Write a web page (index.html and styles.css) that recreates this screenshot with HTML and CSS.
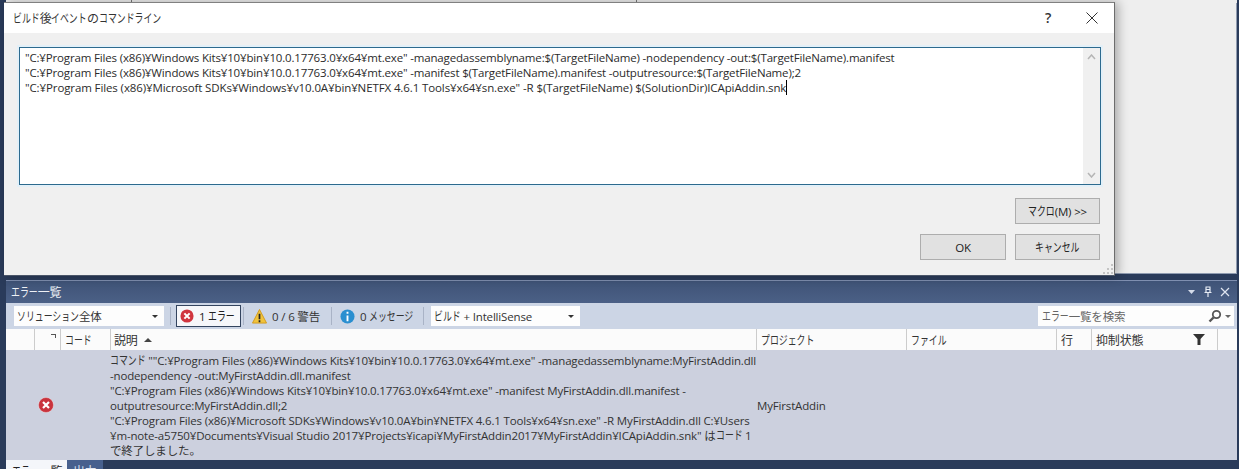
FILE: index.html
```html
<!DOCTYPE html>
<html lang="ja">
<head>
<meta charset="utf-8">
<title>ビルド後イベントのコマンドライン</title>
<link rel="stylesheet" href="styles.css">
</head>
<body>
<div class="desktop">
  <div class="ide-top"><div class="ide-top-sep"></div><div class="ide-top-sep second"></div></div>
  <div class="ide-editor"></div>
  <section class="errors">
    <div class="titlebar">
      <span class="title"><span class="k k3">エラー</span>一覧</span>
      <span class="title-tools">
        <svg width="9" height="6" viewBox="0 0 9 6"><path d="M1 1h7L4.500 5z" fill="#d5dcea"/></svg>
        <svg width="10" height="12" viewBox="0 0 10 12"><path d="M2.500 1h5M3 1.500v5M7 1.500v5M3 3.500h4M1.500 6.500h7M5 7v4" stroke="#e6ebf4" stroke-width="1.200" fill="none"/></svg>
        <svg width="10" height="10" viewBox="0 0 10 10"><path d="M1 1l8 8M9 1l-8 8" stroke="#dfe5f0" stroke-width="1.200"/></svg>
      </span>
    </div>
    <div class="toolbar">
      <div class="combo scope"><span><span class="k k7">ソリューション</span>全体</span><i class="caret"></i></div>
      <i class="sep first"></i>
      <button class="tool active">
        <svg width="14" height="14" viewBox="0 0 16 16"><circle cx="8" cy="8" r="7.500" fill="#d0353f"/><path d="M5 5l6 6M11 5l-6 6" stroke="#fff" stroke-width="2.400"/></svg>
        <span>1 <span class="k k3">エラー</span></span>
      </button>
      <i class="sep"></i>
      <button class="tool warn">
        <svg width="15" height="15" viewBox="0 0 16 16"><path d="M8 .5L15.500 15H.5z" fill="#f0c33c" stroke="#d29a1c"/><path d="M8 5v6M8 12v2" stroke="#222" stroke-width="1.800"/></svg>
        <span>0 / 6 警告</span>
      </button>
      <i class="sep"></i>
      <button class="tool info">
        <svg width="15" height="15" viewBox="0 0 16 16"><circle cx="8" cy="8" r="7.500" fill="#2a8fd0"/><path d="M8 3v2M8 7v6" stroke="#fff" stroke-width="2"/></svg>
        <span>0 <span class="k k5">メッセージ</span></span>
      </button>
      <i class="sep"></i>
      <div class="combo build"><span><span class="k k3">ビルド</span> + IntelliSense</span><i class="caret"></i></div>
      <div class="search">
        <span><span class="k k3">エラー</span>一覧を検索</span>
        <svg width="14" height="14" viewBox="0 0 14 14"><circle cx="8.500" cy="5.500" r="3.700" fill="none" stroke="#555" stroke-width="1.800"/><path d="M5.500 8.500L1.500 12.500" stroke="#555" stroke-width="2.400"/></svg>
        <i class="caret small"></i>
      </div>
    </div>
    <div class="grid head">
      <div class="c c0"></div>
      <div class="c c1"><i class="mark"></i></div>
      <div class="c c2"><span class="k k3">コード</span></div>
      <div class="c c3">説明 <i class="up"></i></div>
      <div class="c c4"><span class="k k6">プロジェクト</span></div>
      <div class="c c5"><span class="k k4">ファイル</span></div>
      <div class="c c6">行</div>
      <div class="c c7">抑制状態<svg width="14" height="13" viewBox="0 0 14 13"><path d="M1 1h12L8.500 6v6H5.500V6z" fill="#333"/></svg></div>
      <div class="c c8"></div>
    </div>
    <div class="grid row">
      <div class="err-icon"><svg width="16" height="16" viewBox="0 0 16 16"><circle cx="8" cy="8" r="7.500" fill="#c9333d"/><circle cx="8" cy="8" r="7.500" fill="none" stroke="#fff" stroke-opacity=".35"/><path d="M5 5l6 6M11 5l-6 6" stroke="#fff" stroke-width="2.200"/></svg></div>
      <div class="desc"><span class="k k4">コマンド</span> ""C:¥Program Files (x86)¥Windows Kits¥10¥bin¥10.0.17763.0¥x64¥mt.exe" -managedassemblyname:MyFirstAddin.dll<br>-nodependency -out:MyFirstAddin.dll.manifest<br>"C:¥Program Files (x86)¥Windows Kits¥10¥bin¥10.0.17763.0¥x64¥mt.exe" -manifest MyFirstAddin.dll.manifest -<br>outputresource:MyFirstAddin.dll;2<br>"C:¥Program Files (x86)¥Microsoft SDKs¥Windows¥v10.0A¥bin¥NETFX 4.6.1 Tools¥x64¥sn.exe" -R MyFirstAddin.dll C:¥Users<br>¥m-note-a5750¥Documents¥Visual Studio 2017¥Projects¥icapi¥MyFirstAddin2017¥MyFirstAddin¥ICApiAddin.snk" は<span class="k k3">コード</span> 1<br>で終了しました。</div>
      <div class="proj">MyFirstAddin</div>
    </div>
    <div class="tabs"><span class="tab on"><span class="k k3">エラー</span>一覧</span><span class="tab">出力</span></div>
  </section>
  <div class="dialog">
    <div class="dlg-title">
      <span class="dlg-name"><span class="k k3">ビルド</span>後<span class="k k4">イベント</span>の<span class="k k7">コマンドライン</span></span>
      <span class="dlg-help">?</span>
      <svg class="dlg-x" width="14" height="14" viewBox="0 0 14 14"><path d="M1.500 1.500l11 11M12.500 1.500l-11 11" stroke="#333" stroke-width="1"/></svg>
    </div>
    <div class="dlg-body">
      <div class="cmd">
        <div class="cmd-text">"C:¥Program Files (x86)¥Windows Kits¥10¥bin¥10.0.17763.0¥x64¥mt.exe" -managedassemblyname:$(TargetFileName) -nodependency -out:$(TargetFileName).manifest<br>"C:¥Program Files (x86)¥Windows Kits¥10¥bin¥10.0.17763.0¥x64¥mt.exe" -manifest $(TargetFileName).manifest -outputresource:$(TargetFileName);2<br><span class="line3">"C:¥Program Files (x86)¥Microsoft SDKs¥Windows¥v10.0A¥bin¥NETFX 4.6.1 Tools¥x64¥sn.exe" -R $(TargetFileName) $(SolutionDir)ICApiAddin.snk</span><i class="cursor"></i></div>
        <div class="scroll">
          <svg width="9" height="6" viewBox="0 0 9 6"><path d="M1 5l3.500-4L8 5" stroke="#b5b5b5" stroke-width="1.500" fill="none"/></svg>
          <svg width="9" height="6" viewBox="0 0 9 6"><path d="M1 1l3.500 4L8 1" stroke="#b5b5b5" stroke-width="1.500" fill="none"/></svg>
        </div>
      </div>
      <div class="btn-row macro"><button class="btn wide"><span class="k k3">マクロ</span>(M) &gt;&gt;</button></div>
      <div class="btn-row actions"><button class="btn">OK</button><button class="btn wide"><span class="k k5">キャンセル</span></button></div>
    </div>
    <svg class="grip" width="10" height="10" viewBox="0 0 10 10"><path d="M8 0h2v2H8zM4 4h2v2H4zM8 4h2v2H8zM0 8h2v2H0zM4 8h2v2H4zM8 8h2v2H8z" fill="#c4c4c4"/></svg>
  </div>
</div>
</body>
</html>
```
FILE: styles.css
```css
* { box-sizing: border-box; }
html, body { margin: 0; padding: 0; }
body { width: 1239px; height: 469px; overflow: hidden; background: #2a3b5a; font-family: "Open Sans", "Noto Sans CJK JP", sans-serif; color: #222; letter-spacing: -0.16px; }
.desktop { position: relative; width: 1239px; height: 469px; display: flex; flex-direction: column; overflow: hidden; padding: 0 2px 0 6px; }
.k { display: inline-block; font-size: 12px; letter-spacing: 0; transform: scaleX(.74); transform-origin: 0 50%; }
.k3 { margin-right: -9.400px; }
.k4 { margin-right: -12.500px; }
.k5 { margin-right: -15.600px; }
.k6 { margin-right: -18.700px; }
.k7 { margin-right: -21.800px; }
.ide-top { height: 3px; background: #eee; display: flex; flex: none; }
.ide-top-sep { width: 1px; margin-left: 125px; background: #777; }
.ide-top-sep.second { margin-left: 504px; }
.ide-editor { height: 271px; background: #eeeeee; border-bottom: 1px solid #8f9bb0; border-right: 1px solid #8f9bb0; flex: none; }
.errors { margin-top: 6px; flex: 1; display: flex; flex-direction: column; border-top: 1px solid #7f8fb0; }
.titlebar { height: 22px; background: linear-gradient(#3f5377, #4b6086); color: #eef1f6; font-size: 12px; display: flex; align-items: center; justify-content: space-between; padding: 0 7px 0 5px; flex: none; }
.title-tools { display: flex; align-items: center; gap: 7px; }
.toolbar { height: 26px; background: #ccd5e5; display: flex; align-items: center; padding-left: 8px; font-size: 11.500px; flex: none; color: #333; }
.combo { height: 20px; background: #fdfdfd; display: flex; align-items: center; justify-content: space-between; padding: 0 6px 0 3px; white-space: nowrap; }
.scope { width: 150px; }
.build { width: 149px; margin-left: 7px; }
.caret { width: 0; height: 0; border: 3px solid transparent; border-top: 3px solid #333; border-bottom: 0; }
.sep { width: 1px; height: 18px; background: #a9b3c6; flex: none; }
.sep.first { margin-left: 6px; }
.tool { height: 22px; border: 1px solid transparent; background: none; display: flex; align-items: center; gap: 5px; padding: 0; font: inherit; color: #333; white-space: nowrap; flex: none; letter-spacing: inherit; }
.tool.active { background: #f6f7fa; border-color: #33445f; color: #222; width: 65px; margin: 0 2px 0 5px; padding-left: 3px; }
.tool.warn { width: 80px; margin-left: 7px; }
.tool.info { width: 84px; margin-left: 7px; }
.search { margin-left: auto; width: 196px; height: 20px; background: #fdfdfd; display: flex; align-items: center; padding: 0 3px 0 4px; color: #666; margin-right: 3px; white-space: nowrap; }
.search span { flex: 1; }
.search .k { flex: none; }
.caret.small { margin-left: 3px; border-top-color: #666; }
.grid { display: flex; flex: none; }
.head { height: 21px; background: #fbfbfb; font-size: 12px; color: #333; }
.c { height: 100%; border-right: 1px solid #ccc; display: flex; align-items: center; padding-left: 4px; white-space: nowrap; }
.c0 { width: 29px; }
.c1 { width: 26px; justify-content: flex-end; align-items: flex-start; padding: 5px 4px 0 0; }
.c2 { width: 50px; }
.c3 { width: 646px; padding-left: 3px; gap: 6px; }
.c4 { width: 150px; }
.c5 { width: 150px; }
.c6 { width: 35px; }
.c7 { width: 126px; justify-content: space-between; padding-right: 11px; }
.c8 { flex: 1; border-right: 0; }
.mark { width: 5px; height: 4px; border-top: 1px solid #555; border-right: 1px solid #555; }
.up { width: 0; height: 0; border: 4px solid transparent; border-bottom: 4px solid #444; border-top: 0; }
.row { height: 110px; background: #ccd0de; font-size: 11.500px; color: #333; align-items: center; }
.err-icon { width: 104px; display: flex; justify-content: flex-start; padding-left: 32px; }
.desc { width: 647px; height: 110px; line-height: 15px; padding: 3px 0 0 0; white-space: nowrap; }
.proj { padding-left: 0; }
.tabs { flex: 1; display: flex; font-size: 12px; overflow: hidden; }
.tab { padding: 2px 6px 0; color: #dfe5f2; background: #47608e; height: 20px; white-space: nowrap; }
.tab.on { background: #f4f6fa; color: #222; width: 61px; }
.dialog { position: absolute; left: 4px; top: 2px; width: 1111px; height: 274px; background: #f0f0f0; border-top: 1px solid #808080; border-right: 1px solid #6d6d6d; border-bottom: 1px solid #4a5568; box-shadow: 3px 0 10px rgba(0,0,0,.3); display: flex; flex-direction: column; }
.dlg-title { height: 30px; background: #fff; display: flex; align-items: center; padding: 0 0 1px 9px; font-size: 12px; color: #333; flex: none; }
.dlg-name { flex: 1; }
.dlg-help { font-size: 14px; font-weight: 600; width: 40px; color: #333; }
.dlg-x { margin-right: 15px; }
.dlg-body { flex: 1; padding: 14px 13px 0 15px; display: flex; flex-direction: column; }
.cmd { height: 138px; background: #fff; border: 1px solid #2d6a8e; box-shadow: 0 0 0 2px #e3f0f8; display: flex; justify-content: space-between; flex: none; }
.cmd-text { padding: 2px 0 0 5px; font-size: 11.500px; line-height: 15px; white-space: nowrap; color: #2b2b2b; }
.line3 { letter-spacing: -0.11px; }
.cursor { display: inline-block; width: 1px; height: 15px; background: #000; vertical-align: top; }
.scroll { width: 17px; background: #f0f0f0; display: flex; flex-direction: column; justify-content: space-between; align-items: center; padding: 6px 0; }
.btn-row { display: flex; justify-content: flex-end; gap: 9px; flex: none; padding-right: 1px; }
.macro { margin-top: 13px; }
.actions { margin-top: 10px; }
.btn { width: 86px; height: 26px; background: #e1e1e1; border: 1px solid #adadad; font: inherit; font-size: 11.500px; color: #222; padding: 0; letter-spacing: inherit; }
.btn.wide { width: 85px; }
.grip { position: absolute; right: 1px; bottom: 1px; }
```
